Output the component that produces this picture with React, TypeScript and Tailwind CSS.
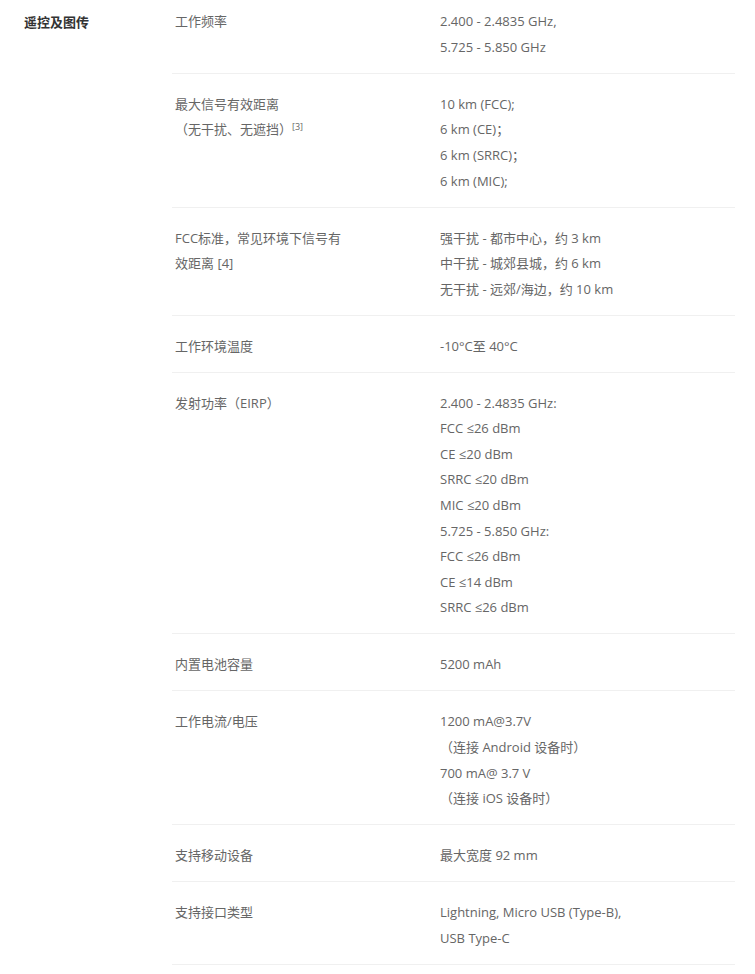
import React from "react";

type Row = { label: React.ReactNode; values: React.ReactNode[] };

const rows: Row[] = [
  { label: "工作频率", values: ["2.400 - 2.4835 GHz,", "5.725 - 5.850 GHz"] },
  {
    label: (
      <>
        <div>最大信号有效距离</div>
        <div>
          （无干扰、无遮挡）<span className="align-top text-[9px] leading-[20px]">[3]</span>
        </div>
      </>
    ),
    values: ["10 km (FCC);", "6 km (CE)；", "6 km (SRRC)；", "6 km (MIC);"],
  },
  {
    label: "FCC标准，常见环境下信号有效距离 [4]",
    values: ["强干扰 - 都市中心，约 3 km", "中干扰 - 城郊县城，约 6 km", "无干扰 - 远郊/海边，约 10 km"],
  },
  { label: "工作环境温度", values: ["-10°C至 40°C"] },
  {
    label: "发射功率（EIRP）",
    values: [
      "2.400 - 2.4835 GHz:",
      "FCC ≤26 dBm",
      "CE ≤20 dBm",
      "SRRC ≤20 dBm",
      "MIC ≤20 dBm",
      "5.725 - 5.850 GHz:",
      "FCC ≤26 dBm",
      "CE ≤14 dBm",
      "SRRC ≤26 dBm",
    ],
  },
  { label: "内置电池容量", values: ["5200 mAh"] },
  {
    label: "工作电流/电压",
    values: ["1200 mA@3.7V", "（连接 Android 设备时）", "700 mA@ 3.7 V", "（连接 iOS 设备时）"],
  },
  { label: "支持移动设备", values: ["最大宽度 92 mm"] },
  { label: "支持接口类型", values: ["Lightning, Micro USB (Type-B),", "USB Type-C"] },
];

export default function App() {
  return (
    <div className="min-h-screen bg-white font-['Open_Sans','Noto_Sans_CJK_SC',sans-serif] text-[13px] leading-[25.6px]">
      <div className="flex pl-6">
        <h3 className="w-[148px] shrink-0 pt-[9.5px] font-bold text-[#333]">遥控及图传</h3>
        <div className="w-[563px]">
          {rows.map((row, i) => (
            <div
              key={i}
              className={`grid grid-cols-[268px_1fr] border-b border-[#f0f0f0] pb-[12.4px] text-[#666] ${
                i === 0 ? "pt-[9.2px]" : "pt-[18px]"
              }`}
            >
              <div className="pl-[3px] pr-[92px]">{row.label}</div>
              <div>
                {row.values.map((v, j) => (
                  <div key={j}>{v}</div>
                ))}
              </div>
            </div>
          ))}
        </div>
      </div>
    </div>
  );
}
